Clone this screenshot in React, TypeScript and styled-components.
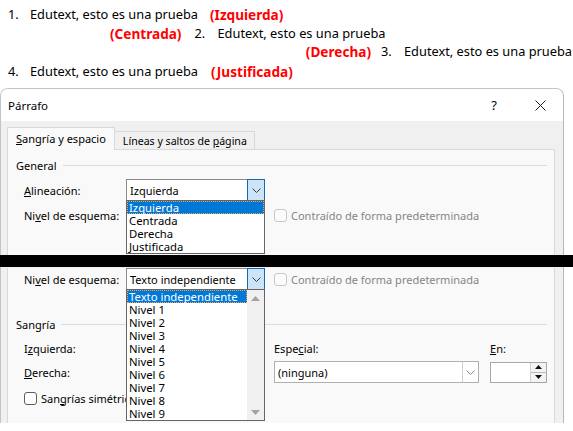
import React from 'react';
import styled, { createGlobalStyle } from 'styled-components';

const GlobalStyle = createGlobalStyle`
  html, body {
    margin: 0;
    padding: 0;
    background: #ffffff;
  }
  body {
    width: 573px;
    height: 431px;
    overflow: hidden;
  }
`;

const ui = `"Noto Sans", "Segoe UI", "Liberation Sans", sans-serif`;

const Page = styled.div`
  width: 573px;
  height: 431px;
  overflow: hidden;
  background: #ffffff;
`;

/* ---------- document lines ---------- */

const Doc = styled.div`
  height: 88px;
  box-sizing: border-box;
  padding-top: 5px;
  font-family: ${ui};
  font-size: 12.8px;
  color: #000;
`;

type Align = 'left' | 'right';

const Line = styled.div<{ $indent?: number; $top?: number; $align?: Align }>`
  display: flex;
  align-items: center;
  justify-content: ${(p) => (p.$align === 'right' ? 'flex-end' : 'flex-start')};
  height: 18px;
  margin-top: ${(p) => p.$top ?? 0}px;
  padding-left: ${(p) => p.$indent ?? 0}px;
  padding-right: ${(p) => (p.$align === 'right' ? 1 : 0)}px;
  white-space: nowrap;
`;

const Num = styled.span<{ $w?: number }>`
  flex: none;
  width: ${(p) => p.$w ?? 22}px;
`;

const Text = styled.span`
  flex: none;
`;

const Tag = styled.span<{ $before?: number; $after?: number }>`
  flex: none;
  color: #ff0000;
  font-weight: 700;
  font-size: 13.6px;
  margin-left: ${(p) => p.$before ?? 0}px;
  margin-right: ${(p) => p.$after ?? 0}px;
`;

/* ---------- dialog frame ---------- */

const Frame = styled.div<{ $h: number; $top?: boolean }>`
  width: 564px;
  height: ${(p) => p.$h}px;
  box-sizing: border-box;
  background: #f0f0f0;
  border-left: 1px solid #c4c4c4;
  border-right: 1px solid #b8b8b8;
  border-top: ${(p) => (p.$top ? '1px solid #c4c4c4' : 'none')};
  border-radius: ${(p) => (p.$top ? '8px 8px 0 0' : '0')};
  overflow: hidden;
  font-family: ${ui};
  font-size: 11px;
  color: #000;
`;

const TitleBar = styled.div`
  display: flex;
  align-items: center;
  height: 32px;
  padding-left: 7px;
  background: #ffffff;
`;

const Title = styled.span`
  flex: 1;
  font-size: 11.5px;
`;

const Help = styled.span`
  width: 46px;
  font-size: 13px;
  text-align: center;
`;

const Close = styled.span`
  display: flex;
  align-items: center;
  justify-content: center;
  width: 46px;
`;

const Body = styled.div`
  padding: 6px 0 0 6px;
`;

const TabStrip = styled.div`
  display: flex;
  align-items: flex-end;
  position: relative;
  z-index: 1;
  margin-bottom: -1px;
`;

const Tab = styled.div<{ $active?: boolean }>`
  box-sizing: border-box;
  height: ${(p) => (p.$active ? 23 : 19)}px;
  padding: ${(p) => (p.$active ? '3px 8px 0' : '2px 7px 0 8px')};
  background: ${(p) => (p.$active ? '#f9f9f9' : '#f0f0f0')};
  border: 1px solid #d9d9d9;
  border-bottom: ${(p) => (p.$active ? 'none' : '1px solid #d9d9d9')};
  margin-left: ${(p) => (p.$active ? 0 : -1)}px;
  font-size: ${(p) => (p.$active ? 11 : 10.6)}px;
  white-space: nowrap;
`;

const Panel = styled.div<{ $open?: boolean }>`
  width: 548px;
  box-sizing: border-box;
  background: #f9f9f9;
  border: 1px solid #d9d9d9;
  border-top: ${(p) => (p.$open ? 'none' : '1px solid #d9d9d9')};
  padding: 0 7px 0 8px;
  height: ${(p) => (p.$open ? '100%' : '140px')};
`;

const Panel2Wrap = styled.div`
  height: 100%;
  padding-left: 6px;
`;

const Heading = styled.div<{ $top: number }>`
  display: flex;
  align-items: center;
  gap: 6px;
  height: 16px;
  margin-top: ${(p) => p.$top}px;
  &::after {
    content: '';
    flex: 1;
    height: 1px;
    background: #dcdcdc;
  }
`;

const Fields = styled.div`
  padding-left: 8px;
`;

const Row = styled.div<{ $top: number }>`
  display: flex;
  align-items: center;
  height: 22px;
  margin-top: ${(p) => p.$top}px;
`;

const Label = styled.span<{ $w?: number }>`
  flex: none;
  width: ${(p) => p.$w ?? 102}px;
  white-space: nowrap;
`;

/* ---------- combo box ---------- */

const Combo = styled.div<{ $w: number; $flat?: boolean }>`
  position: relative;
  display: flex;
  align-items: center;
  width: ${(p) => p.$w}px;
  height: 22px;
  box-sizing: border-box;
  background: #ffffff;
  border: 1px solid ${(p) => (p.$flat ? '#b0b0b0' : '#8a8a8a')};
`;

const ComboValue = styled.span`
  flex: 1;
  padding-left: 3px;
  white-space: nowrap;
  overflow: hidden;
`;

const ComboButton = styled.span<{ $hot?: boolean }>`
  display: flex;
  align-items: center;
  justify-content: center;
  box-sizing: border-box;
  width: ${(p) => (p.$hot ? 18 : 16)}px;
  height: ${(p) => (p.$hot ? 22 : 20)}px;
  margin-right: ${(p) => (p.$hot ? -1 : 0)}px;
  background: ${(p) => (p.$hot ? '#cce4f7' : '#ffffff')};
  border: ${(p) => (p.$hot ? '1px solid #1a66b0' : 'none')};
  border-left: ${(p) => (p.$hot ? '1px solid #1a66b0' : '1px solid #d0d0d0')};
`;

const Chevron = ({ color }: { color: string }) => (
  <svg width="9" height="5" viewBox="0 0 9 5">
    <path d="M0.5 0.5 L4.5 4.5 L8.5 0.5" fill="none" stroke={color} strokeWidth="1" />
  </svg>
);

const DropList = styled.div`
  position: absolute;
  z-index: 10;
  top: 100%;
  left: -1px;
  right: -1px;
  display: flex;
  box-sizing: border-box;
  background: #ffffff;
  border: 1px solid #646464;
`;

const Items = styled.div`
  flex: 1;
`;

const Item = styled.div<{ $selected?: boolean }>`
  height: 13px;
  line-height: 12px;
  box-sizing: border-box;
  padding-left: 1px;
  white-space: nowrap;
  font-size: 11.3px;
  color: ${(p) => (p.$selected ? '#ffffff' : '#000000')};
  background: ${(p) => (p.$selected ? '#0078d7' : 'transparent')};
  border: 1px ${(p) => (p.$selected ? 'dotted #f3a450' : 'solid transparent')};
`;

const ScrollTrack = styled.div`
  display: flex;
  flex-direction: column;
  justify-content: space-between;
  align-items: center;
  width: 17px;
  padding: 6px 0 5px;
  background: #f0f0f0;
`;

const Arrow = ({ up }: { up?: boolean }) => (
  <svg width="9" height="5" viewBox="0 0 9 5">
    <path d={up ? 'M0 5 L4.5 0 L9 5 Z' : 'M0 0 L4.5 5 L9 0 Z'} fill="#a3a3a3" />
  </svg>
);

/* ---------- checkbox / spin ---------- */

const Check = styled.label<{ $disabled?: boolean; $left?: number }>`
  display: flex;
  align-items: center;
  gap: 4px;
  margin-left: ${(p) => p.$left ?? 0}px;
  white-space: nowrap;
  color: ${(p) => (p.$disabled ? '#858585' : '#000000')};
`;

const Box = styled.span<{ $disabled?: boolean }>`
  flex: none;
  width: 13px;
  height: 13px;
  box-sizing: border-box;
  border-radius: 3px;
  background: ${(p) => (p.$disabled ? '#fbfbfb' : '#ffffff')};
  border: 1px solid ${(p) => (p.$disabled ? '#c8c8c8' : '#5c5c5c')};
`;

const Grid = styled.div`
  display: grid;
  grid-template-columns: 102px 148px 216px 57px;
  grid-auto-rows: 22px;
  row-gap: 2px;
  align-items: center;
  margin-top: 5px;
`;

const Spin = styled.div<{ $w: number }>`
  display: flex;
  justify-content: flex-end;
  width: ${(p) => p.$w}px;
  height: 21px;
  box-sizing: border-box;
  background: #ffffff;
  border: 1px solid #a8a8a8;
`;

const SpinButtons = styled.div`
  display: flex;
  flex-direction: column;
  width: 15px;
  border-left: 1px solid #d0d0d0;
  background: #f3f3f3;
`;

const SpinHalf = styled.span<{ $top?: boolean }>`
  flex: 1;
  display: flex;
  align-items: center;
  justify-content: center;
  border-bottom: ${(p) => (p.$top ? '1px solid #b8b8b8' : 'none')};
`;

const Tri = ({ up }: { up?: boolean }) => (
  <svg width="7" height="4" viewBox="0 0 7 4">
    <path d={up ? 'M0 4 L3.5 0 L7 4 Z' : 'M0 0 L3.5 4 L7 0 Z'} fill="#111" />
  </svg>
);

const BlackBar = styled.div`
  height: 12px;
  background: #000000;
`;

const SpinBox = ({ w }: { w: number }) => (
  <Spin $w={w}>
    <SpinButtons>
      <SpinHalf $top>
        <Tri up />
      </SpinHalf>
      <SpinHalf>
        <Tri />
      </SpinHalf>
    </SpinButtons>
  </Spin>
);

const alignments = ['Izquierda', 'Centrada', 'Derecha', 'Justificada'];
const levels = ['Texto independiente', 'Nivel 1', 'Nivel 2', 'Nivel 3', 'Nivel 4', 'Nivel 5', 'Nivel 6', 'Nivel 7', 'Nivel 8', 'Nivel 9'];

const LevelLabel = () => (
  <Label>
    Ni<u>v</u>el de esquema:
  </Label>
);

const Collapsed = () => (
  <Check $disabled $left={9}>
    <Box $disabled />
    <span>Contraído de forma predeterminada</span>
  </Check>
);

const sample = 'Edutext, esto es una prueba';

export default function App() {
  return (
    <Page>
      <GlobalStyle />
      <Doc>
        <Line $indent={8}>
          <Num>1.</Num>
          <Text>{sample}</Text>
          <Tag $before={12}>(Izquierda)</Tag>
        </Line>
        <Line $indent={110} $top={1}>
          <Tag $after={13}>(Centrada)</Tag>
          <Num $w={23}>2.</Num>
          <Text>{sample}</Text>
        </Line>
        <Line $align="right">
          <Tag $after={10}>(Derecha)</Tag>
          <Num $w={23}>3.</Num>
          <Text>{sample}</Text>
        </Line>
        <Line $indent={8} $top={2}>
          <Num>4.</Num>
          <Text>{sample}</Text>
          <Tag $before={13}>(Justificada)</Tag>
        </Line>
      </Doc>

      <Frame $h={167} $top>
        <TitleBar>
          <Title>Párrafo</Title>
          <Help>?</Help>
          <Close>
            <svg width="11" height="11" viewBox="0 0 11 11">
              <path d="M0.5 0.5 L10.5 10.5 M10.5 0.5 L0.5 10.5" stroke="#1a1a1a" strokeWidth="1" />
            </svg>
          </Close>
        </TitleBar>
        <Body>
          <TabStrip>
            <Tab $active>
              <u>S</u>angría y espacio
            </Tab>
            <Tab>
              Líneas y saltos de <u>p</u>ágina
            </Tab>
          </TabStrip>
          <Panel>
            <Heading $top={7}>General</Heading>
            <Fields>
              <Row $top={6}>
                <Label>
                  <u>A</u>lineación:
                </Label>
                <Combo $w={139}>
                  <ComboValue>Izquierda</ComboValue>
                  <ComboButton $hot>
                    <Chevron color="#3c3c3c" />
                  </ComboButton>
                  <DropList>
                    <Items>
                      {alignments.map((a, i) => (
                        <Item key={a} $selected={i === 0}>
                          {a}
                        </Item>
                      ))}
                    </Items>
                  </DropList>
                </Combo>
              </Row>
              <Row $top={3}>
                <LevelLabel />
                <Combo $w={139}>
                  <ComboValue>Texto independiente</ComboValue>
                </Combo>
                <Collapsed />
              </Row>
            </Fields>
          </Panel>
        </Body>
      </Frame>

      <BlackBar />

      <Frame $h={156}>
        <Panel2Wrap>
          <Panel $open>
            <Fields>
              <Row $top={1}>
                <LevelLabel />
                <Combo $w={139}>
                  <ComboValue>Texto independiente</ComboValue>
                  <ComboButton $hot>
                    <Chevron color="#3c3c3c" />
                  </ComboButton>
                  <DropList>
                    <Items>
                      {levels.map((l, i) => (
                        <Item key={l} $selected={i === 0}>
                          {l}
                        </Item>
                      ))}
                    </Items>
                    <ScrollTrack>
                      <Arrow up />
                      <Arrow />
                    </ScrollTrack>
                  </DropList>
                </Combo>
                <Collapsed />
              </Row>
            </Fields>
            <Heading $top={26}>Sangría</Heading>
            <Fields>
              <Grid>
                <Label>
                  I<u>z</u>quierda:
                </Label>
                <SpinBox w={100} />
                <Label>
                  Espe<u>c</u>ial:
                </Label>
                <Label>
                  <u>E</u>n:
                </Label>
                <Label>
                  <u>D</u>erecha:
                </Label>
                <SpinBox w={100} />
                <Combo $w={205} $flat>
                  <ComboValue>(ninguna)</ComboValue>
                  <ComboButton>
                    <Chevron color="#8a8a8a" />
                  </ComboButton>
                </Combo>
                <SpinBox w={57} />
              </Grid>
              <Row $top={4}>
                <Check>
                  <Box />
                  <span>
                    San<u>g</u>rías simétricas
                  </span>
                </Check>
              </Row>
            </Fields>
          </Panel>
        </Panel2Wrap>
      </Frame>
    </Page>
  );
}
